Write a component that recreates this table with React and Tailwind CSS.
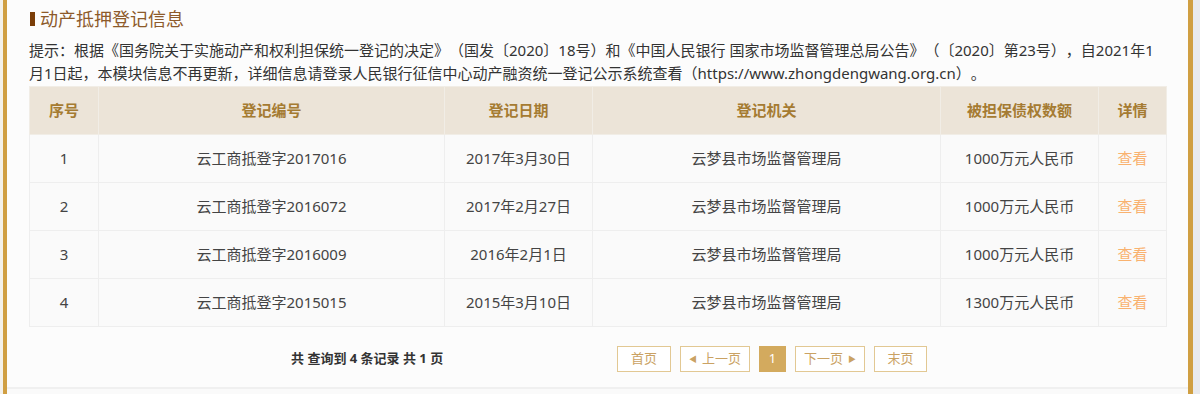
const rows = [
  { no: 1, code: '云工商抵登字2017016', date: '2017年3月30日', org: '云梦县市场监督管理局', amount: '1000万元人民币' },
  { no: 2, code: '云工商抵登字2016072', date: '2017年2月27日', org: '云梦县市场监督管理局', amount: '1000万元人民币' },
  { no: 3, code: '云工商抵登字2016009', date: '2016年2月1日', org: '云梦县市场监督管理局', amount: '1000万元人民币' },
  { no: 4, code: '云工商抵登字2015015', date: '2015年3月10日', org: '云梦县市场监督管理局', amount: '1300万元人民币' },
]

const headers = ['序号', '登记编号', '登记日期', '登记机关', '被担保债权数额', '详情']
const widths = [69, 346, 148, 348, 158, 68]

function PageButton({ children, active = false, className = '' }) {
  return (
    <span
      className={
        active
          ? 'inline-flex h-[26px] items-center justify-center border border-[#d3aa5e] bg-[#d3aa5e] text-[13px] text-white ' + className
          : 'inline-flex h-[26px] items-center justify-center border border-[#e2c893] bg-white text-[13px] text-[#caa263] ' + className
      }
    >
      {children}
    </span>
  )
}

export default function App() {
  return (
    <div
      className="flex h-[394px] w-[1200px] overflow-hidden bg-[#f4f1ea] [text-spacing-trim:space-all]"
      style={{ fontFamily: '"Noto Sans", "Noto Sans CJK SC", sans-serif' }}
    >
      <div className="ml-[3px] flex h-full w-[1190px] flex-col border-l-[4px] border-r-[5px] border-[#d09f42] bg-[#fcfcfc]">
        <div className="flex flex-1 flex-col px-[22px] pt-[7px]">
          <div className="flex h-[24px] items-center gap-[5px] pl-px">
            <span className="h-[14px] w-[5px] bg-[#7a3d08]" />
            <span className="text-[18px] leading-[24px] text-[#8d5a2a]">动产抵押登记信息</span>
          </div>
          <div className="mt-[8px] text-[15px] leading-[23px] text-[#333333]">
            <div className="whitespace-nowrap">
              提示：根据《国务院关于实施动产和权利担保统一登记的决定》（国发〔2020〕18号）和《中国人民银行 国家市场监督管理总局公告》（〔2020〕第23号），自2021年1
            </div>
            <div className="whitespace-nowrap">
              月1日起，本模块信息不再更新，详细信息请登录人民银行征信中心动产融资统一登记公示系统查看（https://www.zhongdengwang.org.cn）。
            </div>
          </div>
          <table className="mt-[1px] w-[1137px] table-fixed border-collapse text-[15px]">
            <colgroup>
              {widths.map((w, i) => (
                <col key={i} style={{ width: w }} />
              ))}
            </colgroup>
            <thead>
              <tr className="h-[48px] bg-[#ece4d8]">
                {headers.map((h) => (
                  <th key={h} className="border border-[#f1ede6] text-center font-bold text-[#a57b32]">
                    {h}
                  </th>
                ))}
              </tr>
            </thead>
            <tbody>
              {rows.map((r) => (
                <tr key={r.no} className="h-[48px] bg-[#fafafa] text-[#444444]">
                  <td className="border border-[#eeeeee] text-center">{r.no}</td>
                  <td className="border border-[#eeeeee] text-center">{r.code}</td>
                  <td className="border border-[#eeeeee] text-center">{r.date}</td>
                  <td className="border border-[#eeeeee] text-center">{r.org}</td>
                  <td className="border border-[#eeeeee] text-center">{r.amount}</td>
                  <td className="border border-[#eeeeee] text-center text-[#f9b26f]">查看</td>
                </tr>
              ))}
            </tbody>
          </table>
          <div className="mt-[19px] flex h-[26px] items-center">
            <div className="w-[588px] pl-[262px] text-[13px] font-bold text-[#333333]">共 查询到 4 条记录 共 1 页</div>
            <div className="flex gap-[9px]">
              <PageButton className="w-[54px]">首页</PageButton>
              <PageButton className="w-[70px] gap-[5px]">
                <span className="text-[8px]">◀</span>上一页
              </PageButton>
              <PageButton active className="w-[27px]">
                1
              </PageButton>
              <PageButton className="w-[70px] gap-[5px]">
                下一页<span className="text-[8px]">▶</span>
              </PageButton>
              <PageButton className="w-[53px]">末页</PageButton>
            </div>
          </div>
        </div>
        <div className="h-[7px] border-t-2 border-[#f0f0f0] bg-[#fafafa]" />
      </div>
      <div className="flex-1 bg-[#e9eaed]" />
    </div>
  )
}
